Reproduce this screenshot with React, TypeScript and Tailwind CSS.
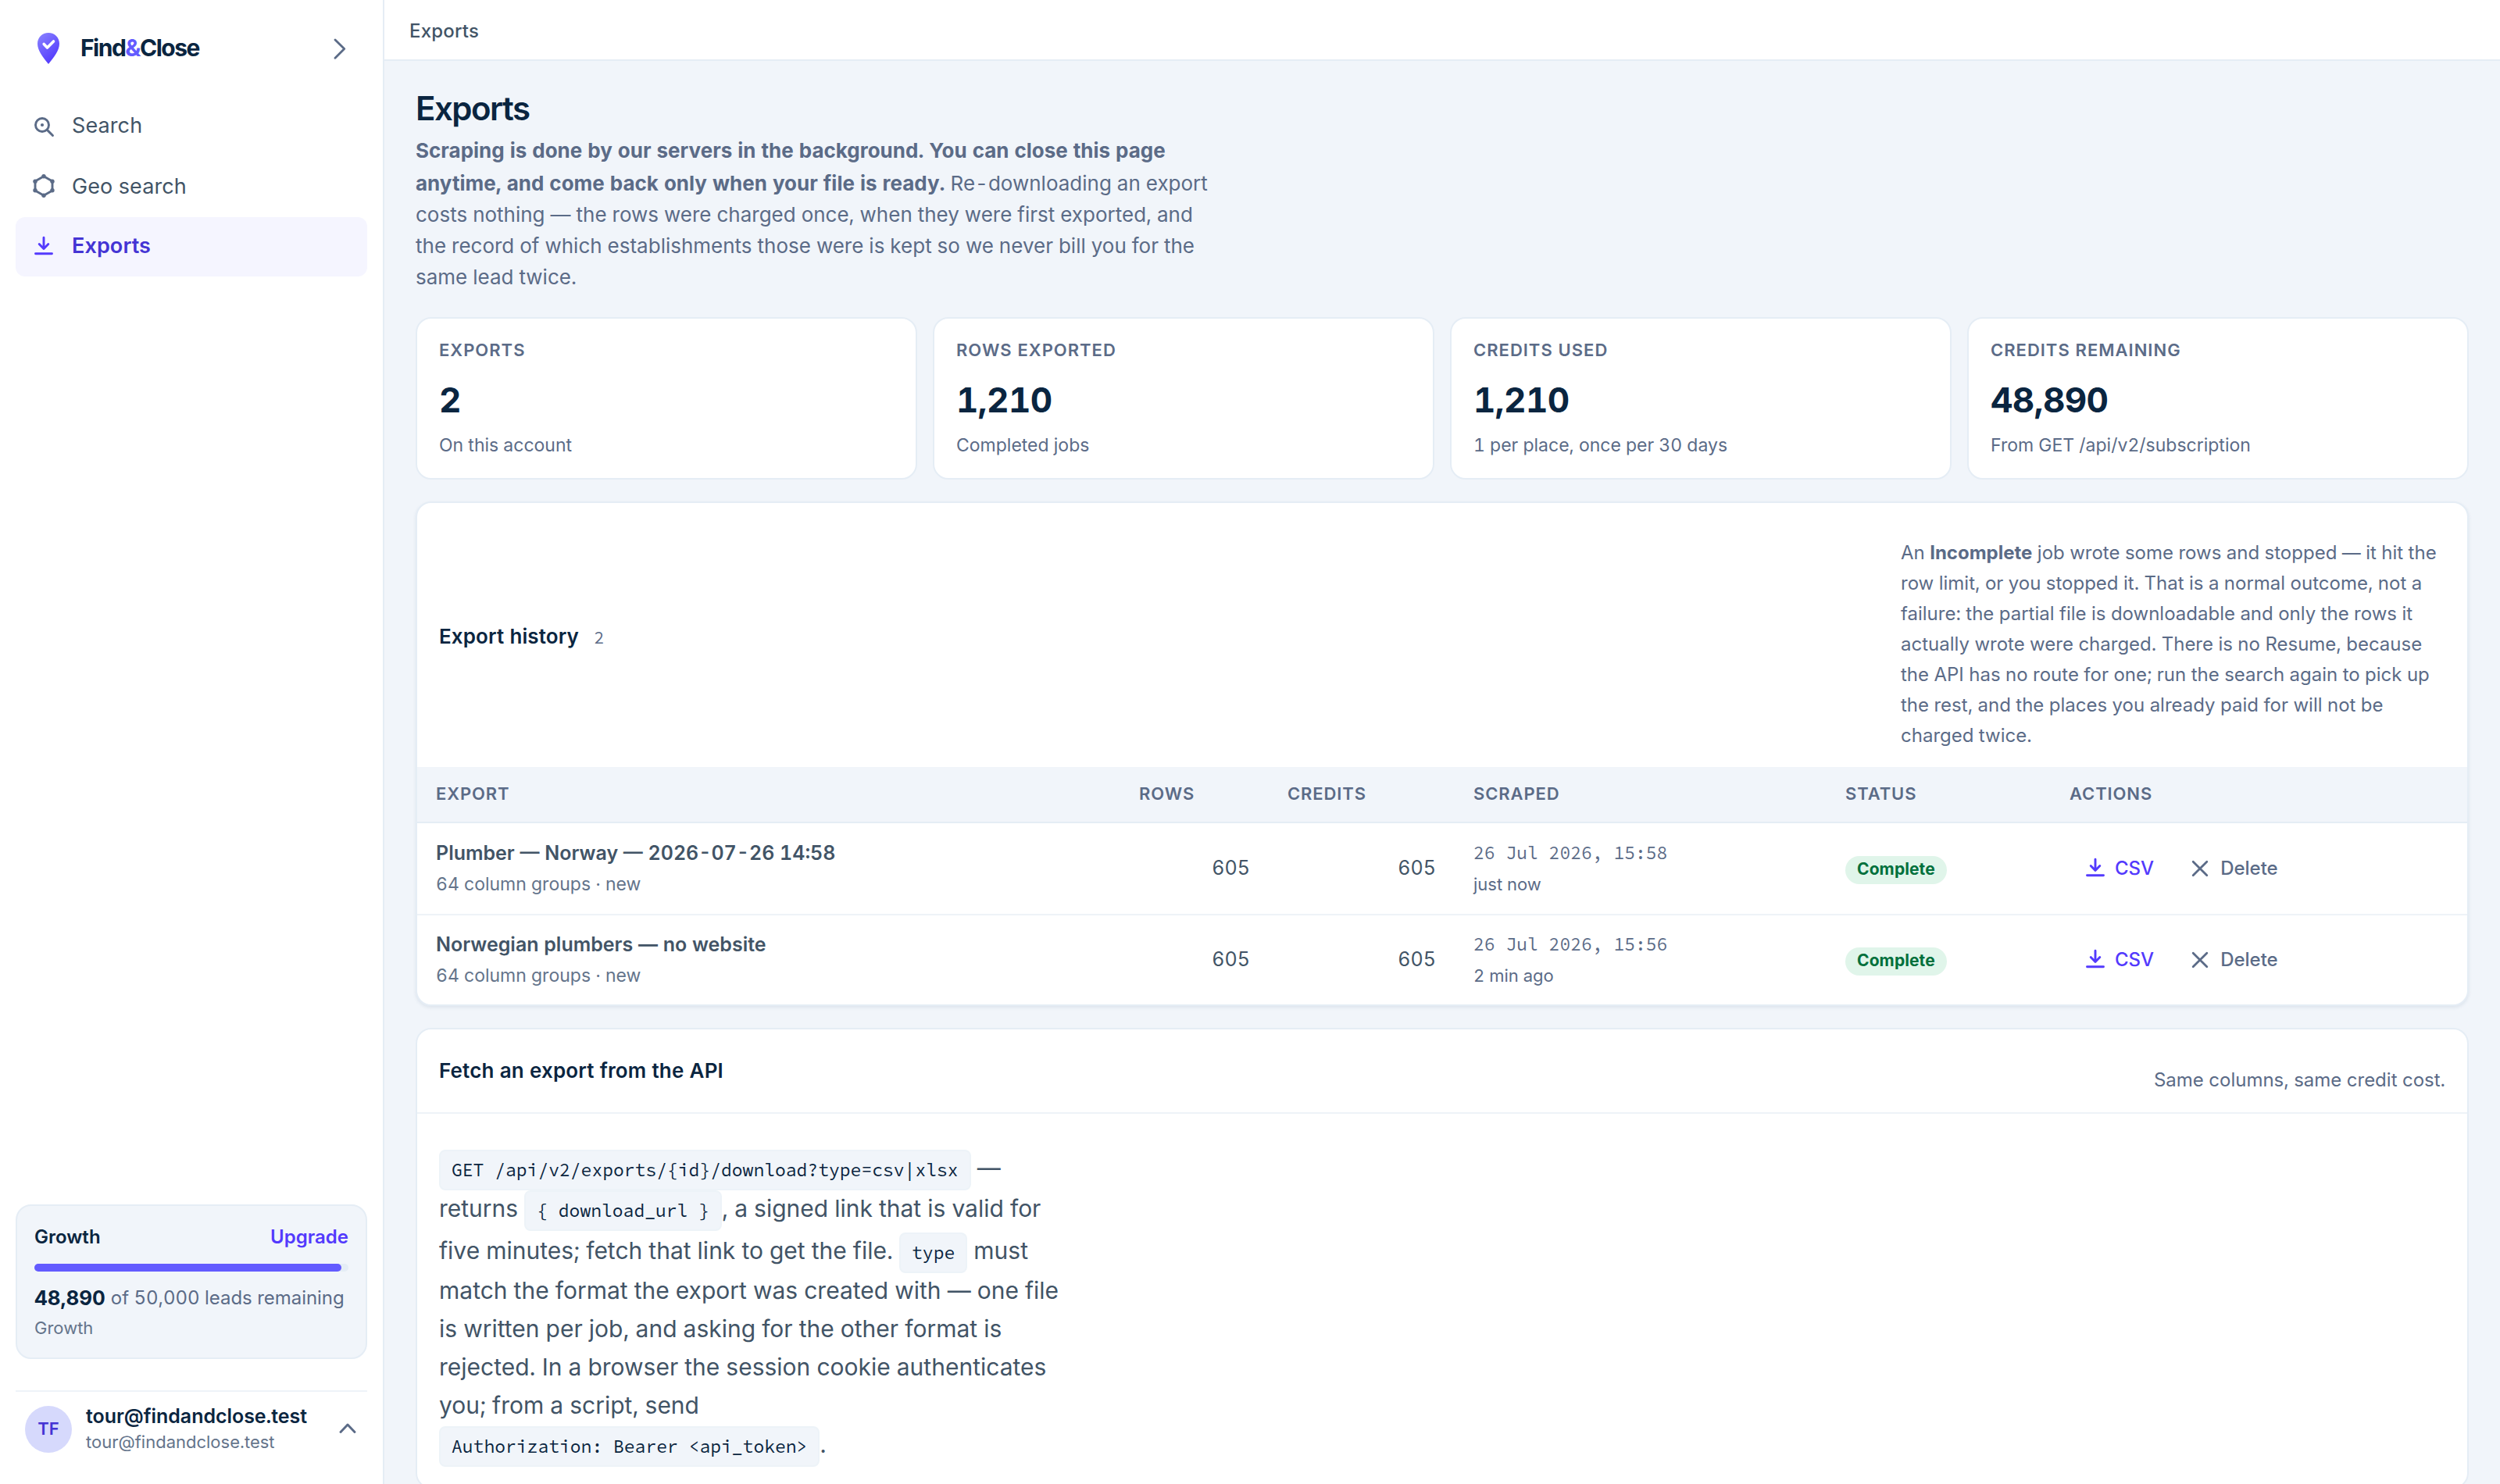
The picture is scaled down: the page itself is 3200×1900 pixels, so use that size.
import React from "react";

const Download = () => (
  <svg viewBox="0 0 16 16" className="size-8" fill="none" stroke="currentColor" strokeWidth="1.45" strokeLinecap="round" strokeLinejoin="round">
    <path d="M8 2.1v7.1M5.1 6.3 8 9.25l2.9-2.95M2.75 12.35h10.5" />
  </svg>
);

const SearchIcon = () => (
  <svg viewBox="0 0 16 16" className="size-8" fill="none" stroke="currentColor" strokeWidth="1.45" strokeLinecap="round">
    <circle cx="7" cy="7" r="4.25" />
    <path d="m10.200 10.200 3.550 3.550" />
    <circle cx="7" cy="7" r="1.050" fill="currentColor" stroke="none" />
  </svg>
);

const GeoIcon = () => (
  <svg viewBox="0 0 16 16" className="size-8" fill="none" stroke="currentColor" strokeWidth="1.45">
    <path d="M8 1.900 13.500 5v6L8 14.100 2.500 11V5z" strokeLinejoin="round" />
    <g fill="currentColor" stroke="none">
      <circle cx="8" cy="1.900" r="1.350" /><circle cx="13.500" cy="5.100" r="1.350" /><circle cx="13.500" cy="10.900" r="1.350" />
      <circle cx="8" cy="14.100" r="1.350" /><circle cx="2.500" cy="10.900" r="1.350" /><circle cx="2.500" cy="5.100" r="1.350" />
    </g>
  </svg>
);

const Cross = () => (
  <svg viewBox="0 0 16 16" className="size-8" fill="none" stroke="currentColor" strokeWidth="1.4" strokeLinecap="round">
    <path d="m3.600 3.600 8.800 8.800M12.400 3.600l-8.800 8.800" />
  </svg>
);

const stats = [
  ["EXPORTS", "2", "On this account"],
  ["ROWS EXPORTED", "1,210", "Completed jobs"],
  ["CREDITS USED", "1,210", "1 per place, once per 30 days"],
  ["CREDITS REMAINING", "48,890", "From GET /api/v2/subscription"],
];

const rows = [
  { title: "Plumber — Norway — 2026-07-26 14:58", date: "26 Jul 2026, 15:58", ago: "just now", box: "h-[118px] border-b-2" },
  { title: "Norwegian plumbers — no website", date: "26 Jul 2026, 15:56", ago: "2 min ago", box: "h-[114px]" },
];

const Code = ({ children }: { children: React.ReactNode }) => (
  <code className="inline-block h-[52px] rounded-lg border-2 border-[#edf3f8] bg-[#f1f5fa] px-3.5 align-baseline font-['Source_Code_Pro','Liberation_Mono',monospace] text-[23px] leading-[48px] tracking-normal text-[#0a2540]">{children}</code>
);

const cols = "grid grid-cols-[900px_190px_238px_476px_287px_1fr]";

export default function App() {
  return (
    <div className="flex h-[1900px] w-[3200px] overflow-hidden bg-[#f1f5fa] font-['Inter',sans-serif] tabular-nums text-[#425466]">
      <aside className="flex w-[492px] shrink-0 flex-col border-r-2 border-[#e5edf5] bg-white px-5 pb-[38px]">
        <div className="flex h-[122px] items-center pt-0.5 pr-[27px] pl-[26px]">
          <svg viewBox="0 0 32 42" className="h-[42px] w-8">
            <defs>
              <linearGradient id="pin" x1="0" y1="0" x2="0.6" y2="1">
                <stop offset="0" stopColor="#8b85ff" />
                <stop offset="1" stopColor="#533afd" />
              </linearGradient>
            </defs>
            <path d="M16 1C8 1 2 7 2 15c0 9 7 17 14 26 7-9 14-17 14-26C30 7 24 1 16 1z" fill="url(#pin)" />
            <path d="m10.200 15.400 4.300 4.600 8-8" fill="none" stroke="#fff" strokeWidth="3.600" strokeLinecap="round" strokeLinejoin="round" />
          </svg>
          <div className="ml-[25px] pb-0.5 text-[30px] font-bold tracking-[-1.5px] text-[#0a2540]">Find<span className="text-[#635bff]">&amp;</span>Close</div>
          <svg viewBox="0 0 16 27" className="ml-auto h-[27px] w-4 text-[#5b6b87]" fill="none" stroke="currentColor" strokeWidth="2.8" strokeLinecap="round" strokeLinejoin="round"><path d="m2 2 11.700 11.600L2 25.200" /></svg>
        </div>
        <nav className="flex flex-col gap-0.5 text-[27px] tracking-[0.1px]">
          <div className="flex h-[76px] items-center gap-5 px-5 pt-[3px]"><span className="text-[#5b6b87]"><SearchIcon /></span>Search</div>
          <div className="flex h-[76px] items-center gap-5 px-5"><span className="text-[#5b6b87]"><GeoIcon /></span><span className="pt-0.5">Geo search</span></div>
          <div className="flex h-[76px] items-center gap-5 rounded-xl bg-[#f5f5ff] px-5 font-semibold text-[#4434d4]"><span className="text-[#533afd]"><Download /></span><span className="pb-px">Exports</span></div>
        </nav>
        <div className="mt-auto h-[198px] rounded-[20px] border-2 border-[#e5edf5] bg-[#f1f5fa] px-[22px] pt-[22px]">
          <div className="flex h-9 items-center justify-between text-[24px] font-semibold text-[#0a2540]">Growth<span className="text-[#533afd]">Upgrade</span></div>
          <div className="mt-4 h-2.5 rounded-full bg-[#e5edf5]"><div className="h-full w-[97.8%] rounded-full bg-[#635bff]" /></div>
          <div className="mt-4 flex h-9 items-center text-[24px] tracking-[-0.03px] text-[#5b6b87]"><b className="mr-[7px] pb-px text-[26px] text-[#0a2540]">48,890</b>of 50,000 leads remaining</div>
          <div className="mt-0.5 text-[22px] leading-9 text-[#64748b]">Growth</div>
        </div>
        <div className="mt-10 flex items-center border-t-2 border-[#eef3f8] pt-[14px] pr-3.5 pl-3">
          <div className="mt-0.5 flex size-[60px] items-center justify-center rounded-full bg-[#d6d9fc] pb-0.5 text-[22px] font-semibold text-[#4434d4]">TF</div>
          <div className="ml-[18px]">
            <div className="text-[25px] leading-[34px] font-semibold tracking-[-0.05px] text-[#0a2540]">tour@findandclose.test</div>
            <div className="text-[22px] leading-8 text-[#64748b]">tour@findandclose.test</div>
          </div>
          <svg viewBox="0 0 22 14" className="ml-auto h-[14px] w-[22px] text-[#5b6b87]" fill="none" stroke="currentColor" strokeWidth="2.9" strokeLinecap="round" strokeLinejoin="round"><path d="M2 11.500 11 2l9 9.500" /></svg>
        </div>
      </aside>
      <div className="flex min-w-0 flex-1 flex-col">
        <header className="flex h-[78px] shrink-0 items-center border-b-2 border-[#e5edf5] bg-white px-8 pt-[3px] text-[24px] font-medium tracking-[0.2px]">Exports</header>
        <main className="flex flex-col px-10 pt-[34px]">
          <h1 className="h-[54px] text-[42px] leading-[54px] font-semibold tracking-[-1.5px] text-[#0a2540]">Exports</h1>
          <p className="mt-[7px] text-[26px] leading-10 text-[#5b6b87]">
            <b className="block h-[42px] font-bold">Scraping is done by our servers in the background. You can close this page</b>
            <b className="font-bold">anytime, and come back only when your file is ready.</b> Re-downloading an export<br />
            costs nothing — the rows were charged once, when they were first exported, and<br />the record of which establishments those were is kept so we never bill you for the<br />same lead twice.
          </p>
          <section className="mt-[31px] grid grid-cols-4 gap-5">
            {stats.map(([label, value, note]) => (
              <div key={label} className="h-[208px] rounded-[20px] border-2 border-[#e5edf5] bg-white px-7 pt-6">
                <div className="text-[22px] leading-8 font-semibold tracking-[1px] text-[#5b6b87]">{label}</div>
                <div className="mt-[18px] text-[44px] leading-[60px] font-bold tracking-[-0.6px] text-[#0a2540]">{value}</div>
                <div className="mt-3 text-[23px] leading-8 text-[#5b6b87]">{note}</div>
              </div>
            ))}
          </section>
          <section className="mt-7 h-[646px] overflow-hidden rounded-[20px] border-2 border-[#e5edf5] bg-white shadow-[0_2px_4px_rgba(50,80,120,0.1)]">
            <div className="flex h-[338px] items-center justify-between px-7">
              <h2 className="pt-0.5 text-[26px] font-semibold tracking-[0.12px] text-[#0a2540]">Export history <span className="ml-3 font-['Source_Code_Pro','Liberation_Mono',monospace] text-[22px] font-normal text-[#5b6b87]">2</span></h2>
              <p className="mt-[23px] w-[697px] text-[24px] leading-[39px] text-[#5b6b87]">
                An <b className="font-bold">Incomplete</b> job wrote some rows and stopped — it hit the<br />row limit, or you stopped it. That is a normal outcome, not a<br />failure: the partial file is downloadable and only the rows it<br />actually wrote were charged. There is no Resume, because<br />the API has no route for one; run the search again to pick up<br />the rest, and the places you already paid for will not be<br />charged twice.
              </p>
            </div>
            <div className={`${cols} h-[72px] items-center border-b-2 border-[#e5edf5] bg-[#f1f5fa] px-6 pb-px text-[22px] font-semibold tracking-[0.9px] text-[#5b6b87]`}>
              <div>EXPORT</div><div>ROWS</div><div>CREDITS</div><div>SCRAPED</div><div>STATUS</div><div>ACTIONS</div>
            </div>
            {rows.map((r) => (
              <div key={r.date} className={`${cols} ${r.box} items-center border-[#eef3f8] px-6`}>
                <div>
                  <div className="text-[25px] leading-10 font-semibold">{r.title}</div>
                  <div className="text-[23px] leading-10 text-[#64748b]">64 column groups · new</div>
                </div>
                <div className="pr-12 text-right text-[25px]">605</div>
                <div className="pr-12 text-right text-[25px]">605</div>
                <div>
                  <div className="font-['Source_Code_Pro','Liberation_Mono',monospace] text-[23px] leading-10 text-[#5b6b87]">{r.date}</div>
                  <div className="text-[22px] leading-10 text-[#5b6b87]">{r.ago}</div>
                </div>
                <div className="flex pt-1"><span className="flex h-9 items-center rounded-full bg-[#e0f5ea] px-[15px] pb-[3px] text-[21px] font-bold tracking-[0.1px] text-[#00703c]">Complete</span></div>
                <div className="flex items-center pl-[17px] text-[24px] font-medium">
                  <span className="flex items-center gap-[9px] text-[#533afd]"><Download />CSV</span>
                  <span className="ml-[43px] flex items-center gap-2.5 text-[#5b6b87]"><Cross />Delete</span>
                </div>
              </div>
            ))}
          </section>
          <section className="mt-7 h-[590px] rounded-[20px] border-2 border-[#e5edf5] bg-white">
            <div className="flex h-[108px] items-center justify-between border-b-2 border-[#eef3f8] px-7">
              <h2 className="pb-0.5 text-[26px] font-semibold tracking-[0.15px] text-[#0a2540]">Fetch an export from the API</h2>
              <p className="mt-[23px] text-[24px] text-[#5b6b87]">Same columns, same credit cost.</p>
            </div>
            <div className="px-7 pt-[43px] text-[30px]">
              <div className="h-[52px] leading-[52px] whitespace-nowrap"><Code>{"GET /api/v2/exports/{id}/download?type=csv|xlsx"}</Code> —</div>
              <div className="h-[54px] leading-[52px] whitespace-nowrap">returns <Code>{"{ download_url }"}</Code>, a signed link that is valid for</div>
              <div className="h-[53px] leading-[52px] whitespace-nowrap">five minutes; fetch that link to get the file. <Code>type</Code> must</div>
              <div className="h-[195px] leading-[49px]">match the format the export was created with — one file<br />is written per job, and asking for the other format is<br />rejected. In a browser the session cookie authenticates<br />you; from a script, send</div>
              <div className="leading-[52px] whitespace-nowrap"><Code>{"Authorization: Bearer <api_token>"}</Code>.</div>
            </div>
          </section>
        </main>
      </div>
    </div>
  );
}
